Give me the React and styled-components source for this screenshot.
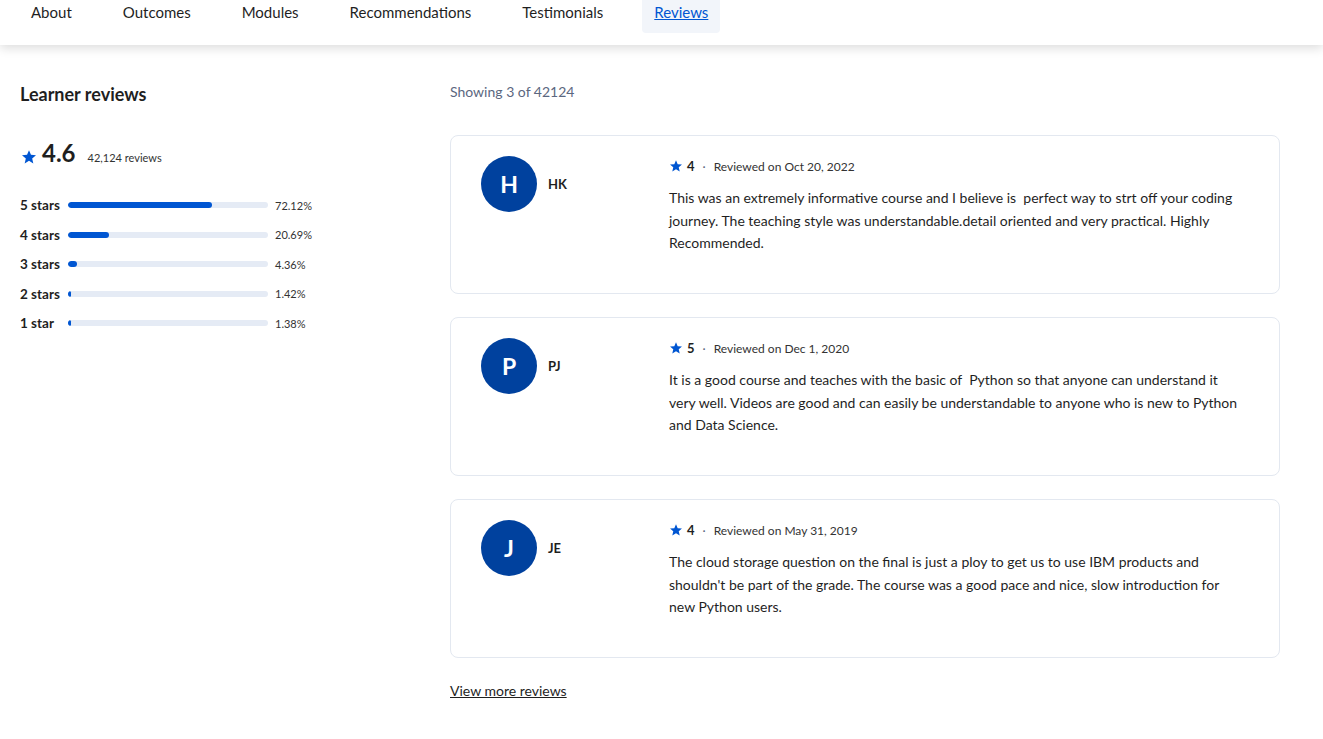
import React from 'react'
import styled, { createGlobalStyle } from 'styled-components'

const GlobalStyle = createGlobalStyle`
  body {
    margin: 0;
    background: #fff;
    color: #1f1f1f;
    font-family: Lato, "Liberation Sans", sans-serif;
  }
`

const NavBar = styled.nav`
  height: 45px;
  background: #fff;
  box-shadow: 0 3px 10px rgba(0, 0, 0, 0.14);
  position: relative;
  z-index: 1;

  ul {
    display: flex;
    gap: 27px;
    list-style: none;
    margin: 0;
    padding: 0 0 0 19px;
  }
`

const NavItem = styled.li`
  height: 33px;
  padding: 0 12px;
  line-height: 24px;
  font-size: 15px;
  border-radius: 0 0 4px 4px;
  background: ${props => (props.$current ? '#f2f5fa' : 'transparent')};

  a {
    color: ${props => (props.$current ? '#0056d2' : '#1f1f1f')};
    text-decoration: ${props => (props.$current ? 'underline' : 'none')};
  }
`

const Main = styled.main`
  display: grid;
  grid-template-columns: 430px 830px;
  padding: 37px 0 0 20px;
`

const Summary = styled.section`
  h2 {
    margin: 0;
    font-size: 18px;
    font-weight: 700;
    line-height: 24px;
  }
`

const Overall = styled.div`
  display: flex;
  align-items: baseline;
  margin-top: 32px;
  height: 36px;

  svg {
    align-self: center;
    margin: 2px 6px 0 2px;
  }

  strong {
    font-size: 24px;
    font-weight: 700;
  }

  span {
    margin-left: 12px;
    font-size: 11px;
    color: #333;
  }
`

const Bars = styled.div`
  display: flex;
  flex-direction: column;
  gap: 9.6px;
  margin-top: 21px;
`

const BarRow = styled.div`
  display: flex;
  align-items: center;
  height: 20px;
  font-size: 13.5px;

  b {
    width: 48px;
    font-weight: 700;
  }

  span {
    margin-left: 7px;
    font-size: 11px;
    color: #333;
  }
`

const Track = styled.div`
  width: 200px;
  height: 6px;
  border-radius: 3px;
  background: #e5ebf5;
  overflow: hidden;
`

const Fill = styled.div`
  height: 100%;
  min-width: 3px;
  border-radius: 3px;
  background: #0056d2;
`

const ReviewList = styled.section`
  display: flex;
  flex-direction: column;
`

const Showing = styled.p`
  margin: 0 0 33px;
  font-size: 14px;
  line-height: 20px;
  color: #5b6780;
`

const Card = styled.article`
  display: flex;
  margin-bottom: 23.5px;
  padding: 20px 30px 38px;
  border: 1px solid #e3e8f0;
  border-radius: 8px;
`

const Reviewer = styled.div`
  display: flex;
  align-items: flex-start;
  gap: 11px;
  width: 188px;
  flex-shrink: 0;

  b {
    font-size: 13px;
    font-weight: 700;
    line-height: 56px;
  }
`

const Avatar = styled.div`
  width: 56px;
  height: 56px;
  border-radius: 50%;
  background: #00419e;
  color: #fff;
  display: grid;
  place-items: center;
  font-size: 23px;
  font-weight: 700;
`

const ReviewBody = styled.div`
  flex: 1;

  p {
    max-width: 572px;
    margin: 11px 0 0;
    font-size: 14px;
    line-height: 22.5px;
    color: #1f1f1f;
  }
`

const Meta = styled.div`
  display: flex;
  align-items: center;
  height: 20px;
  font-size: 12px;
  color: #333;

  svg {
    margin: 0 5px 0 1px;
  }

  b {
    font-size: 13px;
    color: #1f1f1f;
  }

  i {
    font-style: normal;
    margin: 0 8px;
    color: #5b6780;
  }
`

const MoreLink = styled.a`
  font-size: 14px;
  line-height: 20px;
  color: #1f1f1f;
  text-decoration: underline;
  align-self: flex-start;
`

const Star = ({ size = 12 }) => (
  <svg width={size} height={size} viewBox="2 2 20 19.5" fill="#0056d2">
    <path d="M12 17.27L18.18 21l-1.64-7.03L22 9.24l-7.19-.61L12 2 9.19 8.63 2 9.24l5.46 4.73L5.82 21z" />
  </svg>
)

const navLinks = ['About', 'Outcomes', 'Modules', 'Recommendations', 'Testimonials', 'Reviews']

const breakdown = [
  ['5 stars', 72.12],
  ['4 stars', 20.69],
  ['3 stars', 4.36],
  ['2 stars', 1.42],
  ['1 star', 1.38],
]

const reviews = [
  {
    initials: 'HK',
    rating: 4,
    date: 'Oct 20, 2022',
    text: 'This was an extremely informative course and I believe is \u00a0perfect way to strt off your coding journey. The teaching style was understandable.detail oriented and very practical. Highly Recommended.',
  },
  {
    initials: 'PJ',
    rating: 5,
    date: 'Dec 1, 2020',
    text: 'It is a good course and teaches with the basic of \u00a0Python so that anyone can understand it very well. Videos are good and can easily be understandable to anyone who is new to Python and Data Science.',
  },
  {
    initials: 'JE',
    rating: 4,
    date: 'May 31, 2019',
    text: "The cloud storage question on the final is just a ploy to get us to use IBM products and shouldn't be part of the grade. The course was a good pace and nice, slow introduction for new Python users.",
  },
]

export default function App() {
  return (
    <>
      <GlobalStyle />
      <NavBar>
        <ul>
          {navLinks.map(link => (
            <NavItem key={link} $current={link === 'Reviews'}>
              <a href="#">{link}</a>
            </NavItem>
          ))}
        </ul>
      </NavBar>

      <Main>
        <Summary>
          <h2>Learner reviews</h2>
          <Overall>
            <Star size={14} />
            <strong>4.6</strong>
            <span>42,124 reviews</span>
          </Overall>
          <Bars>
            {breakdown.map(([label, pct]) => (
              <BarRow key={label}>
                <b>{label}</b>
                <Track>
                  <Fill style={{ width: `${pct}%` }} />
                </Track>
                <span>{pct.toFixed(2)}%</span>
              </BarRow>
            ))}
          </Bars>
        </Summary>

        <ReviewList>
          <Showing>Showing 3 of 42124</Showing>
          {reviews.map(r => (
            <Card key={r.initials}>
              <Reviewer>
                <Avatar>{r.initials[0]}</Avatar>
                <b>{r.initials}</b>
              </Reviewer>
              <ReviewBody>
                <Meta>
                  <Star />
                  <b>{r.rating}</b>
                  <i>·</i>
                  Reviewed on {r.date}
                </Meta>
                <p>{r.text}</p>
              </ReviewBody>
            </Card>
          ))}
          <MoreLink href="#">View more reviews</MoreLink>
        </ReviewList>
      </Main>
    </>
  )
}
